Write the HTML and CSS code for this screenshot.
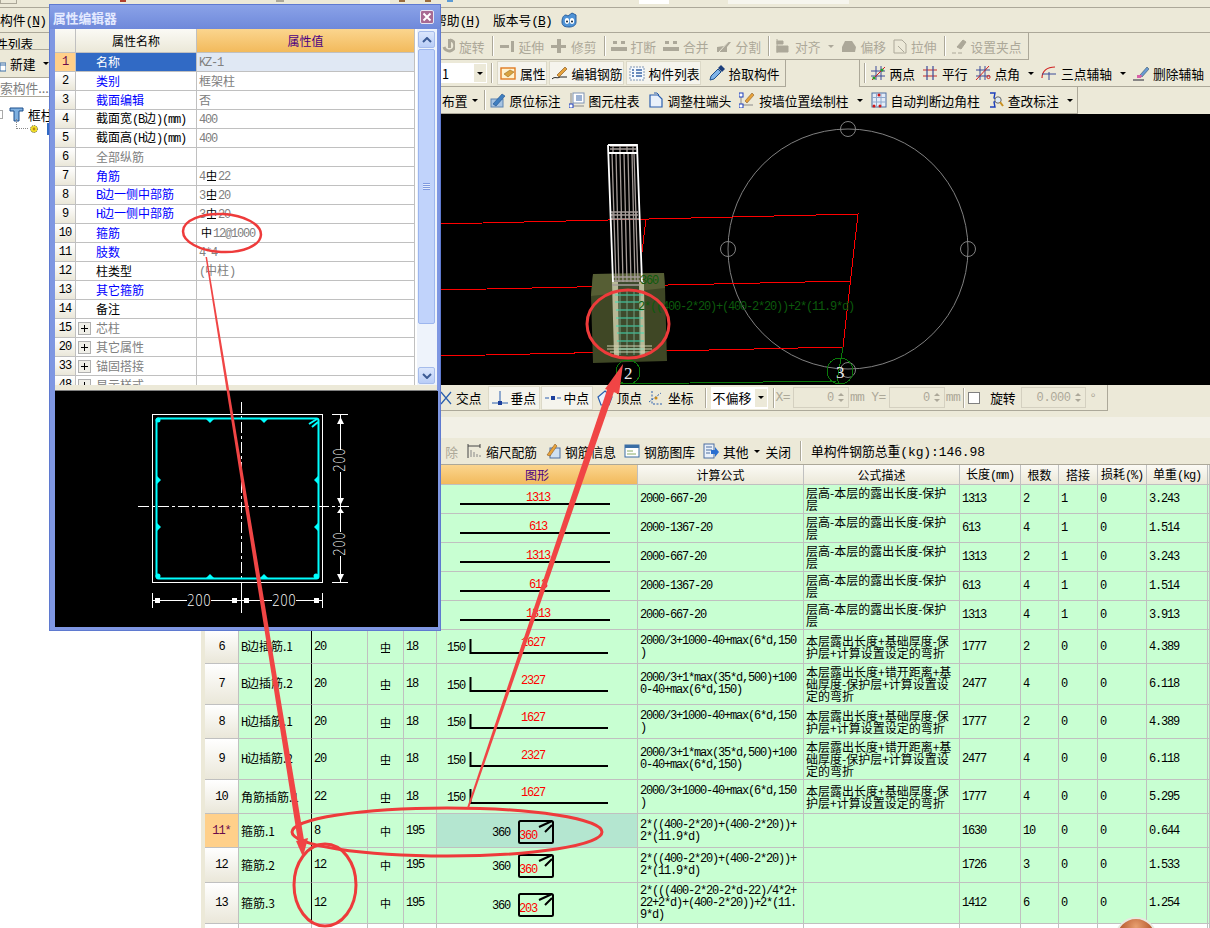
FILE: index.html
```html
<!DOCTYPE html>
<html lang="zh">
<head>
<meta charset="utf-8">
<title>属性编辑器</title>
<link rel="stylesheet" href="styles.css">
</head>
<body>
<div class="page">
  <div class="topstrip">
    <span class="strip-box"></span><span class="strip-dot d1"></span><span class="strip-dot d2"></span>
    <span class="strip-press"></span><span class="strip-dot d3"></span><span class="strip-dot d4"></span><span class="strip-dot d5"></span>
    <span class="strip-white"></span><span class="strip-press p2"></span>
  </div>
  <div class="menu">
    <span class="menu-l">构件<span class="m">(<u>N</u>)</span></span>
    <span class="menu-r">帮助<span class="m">(<u>H</u>)</span></span>
    <span class="menu-r2">版本号<span class="m">(<u>B</u>)</span></span>
    <svg class="i face" viewBox="0 0 16 16"><path d="M1 10C1 5 3 3 5 3L7 4 11 1 15 3 15 10C15 14 11 15 8 15 4 15 1 14 1 10Z" fill="#4f93d6" stroke="#2a5f9e"/><ellipse cx="6" cy="9" rx="2.2" ry="3" fill="#fff"/><ellipse cx="11" cy="9" rx="2.2" ry="3" fill="#fff"/><circle cx="6" cy="9.5" r="1" fill="#123"/><circle cx="11" cy="9.5" r="1" fill="#123"/></svg>
  </div>
  <div class="body">
    <aside class="side">
      <div class="side-tab"><span class="clip">件列表</span></div>
      <div class="side-new"><svg class="new-ic" viewBox="0 0 6 10"><rect y="1" width="6" height="8" fill="#fff" stroke="#3a6ea5"/><path d="M0 3H6" stroke="#3a6ea5"/></svg><span>新建</span><i class="caret"></i></div>
      <div class="side-search">索构件...</div>
      <div class="tree">
        <div class="tree-a">
          <span class="tree-box"></span>
          <svg class="t-ic" viewBox="0 0 15 15"><path d="M1 1H14V4H10V14H5V4H1Z" fill="#7fb0e0" stroke="#1c4f8c"/></svg>
          <span>框柱</span>
        </div>
        <div class="tree-b">
          <span class="tree-dots"></span>
          <svg class="g-ic" viewBox="0 0 10 10"><circle cx="5" cy="5" r="3.5" fill="#f5e22a" stroke="#555" stroke-dasharray="1 1"/><circle cx="5" cy="5" r="1.4" fill="#b98a10"/></svg>
          <span class="tree-sel"></span>
        </div>
      </div>
    </aside>
    <main class="main">
      <div class="row r2">
        <div class="bar off">
          <span class="it"><svg class="i i-s" viewBox="0 0 12 16"><path d="M8 2A5.5 5.5 0 1 1 2 9" fill="none" stroke="#aca899" stroke-width="3"/><rect x="6" y="1" width="3" height="9" fill="#aca899"/></svg><span class="t">旋转</span></span>
          <i class="sep"></i>
          <span class="it"><svg class="i" viewBox="0 0 16 16"><path d="M1 7H10V10H1Z" fill="#aca899"/><rect x="12" y="3" width="3" height="11" fill="#aca899"/></svg><span class="t">延伸</span></span>
          <span class="it"><svg class="i" viewBox="0 0 16 16"><path d="M0 7H15V10H0Z" fill="#aca899"/><rect x="6" y="1" width="4" height="14" fill="#aca899"/></svg><span class="t">修剪</span></span>
          <i class="sep"></i>
          <span class="it"><svg class="i" viewBox="0 0 16 16"><path d="M0 9H16V13H0ZM2 3H6V6H2ZM10 3H14V6H10Z" fill="#aca899"/></svg><span class="t">打断</span></span>
          <span class="it"><svg class="i" viewBox="0 0 16 16"><path d="M0 9H16V13H0ZM2 3H6V6H2ZM10 3H14V6H10Z" fill="#aca899"/></svg><span class="t">合并</span></span>
          <span class="it"><svg class="i" viewBox="0 0 16 16"><path d="M1 14V9L8 8 12 4H15L11 9V14Z" fill="#aca899"/><path d="M3 14 14 2" stroke="#ece9d8"/></svg><span class="t">分割</span></span>
          <i class="sep"></i>
          <span class="it"><svg class="i" viewBox="0 0 14 16"><path d="M1 1V15M1 3H7V6H1ZM1 8H12V14H1Z" fill="#aca899" stroke="#aca899"/></svg><span class="t">对齐</span><i class="caret g"></i></span>
          <span class="it"><svg class="i" viewBox="0 0 16 16"><path d="M4 3H11L15 9 14 14H1L1 9Z" fill="#aca899"/></svg><span class="t">偏移</span></span>
          <span class="it"><svg class="i i-s" viewBox="0 0 14 16"><path d="M1 2H9L13 6V15H1ZM5 8 11 14" fill="none" stroke="#aca899"/></svg><span class="t">拉伸</span></span>
          <i class="sep"></i>
          <span class="it"><svg class="i" viewBox="0 0 16 16"><path d="M6 9 12 2 15 4 10 11ZM1 15H5M7 15H11" fill="#aca899" stroke="#aca899"/></svg><span class="t">设置夹点</span></span>
        </div>
      </div>
      <div class="row r3">
        <div class="bar b3a">
          <span class="combo">1<i class="drop"><i class="caret"></i></i></span>
          <i class="sep"></i>
          <span class="it tgl"><svg class="i" viewBox="0 0 16 16"><rect x="1" y="3" width="14" height="11" fill="#fff3cf" stroke="#e07b22" stroke-width="1.4"/><path d="M4 9 10 5 14 7 8 12Z" fill="#d9a441" stroke="#8a5a12" stroke-width=".5"/></svg><span class="t">属性</span></span>
          <span class="it tgl"><svg class="i" viewBox="0 0 16 16"><path d="M5 10 13 2 15 4 7 12Z" fill="#e7a33c" stroke="#7a4a14" stroke-width=".6"/><path d="M0 14C3 11 5 14 8 12H15" fill="none" stroke="#222"/></svg><span class="t">编辑钢筋</span></span>
          <span class="it tgl"><svg class="i" viewBox="0 0 16 16"><rect x="1" y="2" width="14" height="13" fill="#f4f8fd" stroke="#7e94b3" stroke-dasharray="2 1"/><path d="M3 5H5M7 5H13M3 8H5M7 8H13M3 11H5M7 11H13" stroke="#3864a6" stroke-width="1.5"/></svg><span class="t">构件列表</span></span>
          <span class="it plain"><svg class="i" viewBox="0 0 16 16"><path d="M1 15 2 11 9 4 12 7 5 14Z" fill="#7eb3e8" stroke="#1c4f8c"/><path d="M9 3 12 0 16 4 13 7Z" fill="#1c3f7c"/></svg><span class="t">拾取构件</span></span>
        </div>
        <div class="bar b3b">
          <i class="sep"></i>
          <span class="it"><svg class="i" viewBox="0 0 16 16"><path d="M1 6H15M1 11H15M6 1V15M11 1V15" stroke="#3a4a98"/><path d="M2 15 15 2" stroke="#d02020"/><circle cx="4" cy="13" r="1.6" fill="#2a9a2a"/><circle cx="12" cy="5" r="1.6" fill="#2a9a2a"/></svg><span class="t">两点</span></span>
          <span class="it"><svg class="i" viewBox="0 0 16 16"><path d="M1 5H15M1 11H15" stroke="#c82828" stroke-width="1.2"/><path d="M5 1V15M11 1V15" stroke="#3a4a98" stroke-width="1.2"/></svg><span class="t">平行</span></span>
          <span class="it"><svg class="i" viewBox="0 0 16 16"><path d="M1 5H15M1 11H15M5 1V15M10 1V15" stroke="#3a4a98"/><path d="M1 15 14 1" stroke="#d02020"/><circle cx="13.5" cy="12" r="1.6" fill="none" stroke="#d02020"/></svg><span class="t">点角</span><i class="caret"></i></span>
          <span class="it"><svg class="i" viewBox="0 0 16 16"><path d="M1 13C1 6 6 2 14 2" fill="none" stroke="#d02020" stroke-width="1.2"/><path d="M8 7V15M1 9H15" stroke="#3a4a98"/></svg><span class="t">三点辅轴</span><i class="caret"></i></span>
          <span class="it"><svg class="i" viewBox="0 0 16 16"><path d="M7 10 14 2 16 4 9 12Z" fill="#6a9ad4" stroke="#245" stroke-width=".5"/><path d="M4 10H9L8 13H4Z" fill="#d860a8"/><path d="M0 15H11" stroke="#223"/></svg><span class="t">删除辅轴</span></span>
        </div>
      </div>
      <div class="row r4">
        <div class="bar">
          <span class="t it-nc">布置</span><i class="caret cr0"></i>
          <i class="sep s4"></i>
          <span class="it"><svg class="i" viewBox="0 0 16 16"><rect x="1" y="7" width="12" height="8" fill="#a7c4e2" stroke="#5c84b0"/><path d="M3 12 12 2 15 4 6 14Z" fill="#3f7fc0" stroke="#1c4f8c" stroke-width=".6"/></svg><span class="t">原位标注</span></span>
          <span class="it"><svg class="i" viewBox="0 0 16 16"><rect x="4" y="1" width="11" height="10" fill="#fff" stroke="#7e94b3"/><path d="M7 4H13M7 6H13M7 8H13" stroke="#3864a6"/><path d="M2 1V14H15" fill="none" stroke="#8a8a8a"/><rect x="0" y="12" width="4" height="4" fill="#fff" stroke="#1c3fbc"/></svg><span class="t">图元柱表</span></span>
          <span class="it"><svg class="i" viewBox="0 0 16 16"><path d="M2 3H10L14 7V15H2Z" fill="#eaf1fa" stroke="#2a5fae" stroke-width="1.2"/><path d="M6 1H9L11 3" fill="none" stroke="#2a5fae"/></svg><span class="t">调整柱端头</span></span>
          <span class="it"><svg class="i" viewBox="0 0 16 16"><path d="M2 3V13H14" fill="none" stroke="#8a8a8a"/><rect x="0" y="1" width="4" height="4" fill="#fff" stroke="#1c3fbc"/><rect x="0" y="12" width="4" height="4" fill="#fff" stroke="#1c3fbc"/><path d="M6 9 13 1 15 3 8 11Z" fill="#e7a33c" stroke="#7a4a14" stroke-width=".5"/></svg><span class="t">按墙位置绘制柱</span><i class="caret cr7"></i></span>
          <span class="it"><svg class="i" viewBox="0 0 16 16"><rect x="1" y="1" width="14" height="14" fill="#e3ecf8" stroke="#4d6ea0"/><path d="M5.5 1V15M10 1V15M1 5.5H15M1 10H15" stroke="#8fa9cc"/><circle cx="8" cy="3" r="1.5" fill="#d01818"/><circle cx="3" cy="14" r="1.5" fill="#d01818"/><circle cx="9" cy="14" r="1.5" fill="#d01818"/></svg><span class="t">自动判断边角柱</span></span>
          <span class="it"><svg class="i" viewBox="0 0 16 16"><path d="M2 1H7L6 6 9 8 6 10 7 15H2" fill="none" stroke="#1c3fbc" stroke-width="1.4"/><circle cx="10" cy="8" r="3.2" fill="#dfeaf6" stroke="#666"/><path d="M12 10 15 14" stroke="#c89020" stroke-width="2"/></svg><span class="t">查改标注</span><i class="caret cr7"></i></span>
        </div>
      </div>
      <div class="view">
        <svg class="scene" viewBox="205 114 1005 271">
          <rect x="205" y="114" width="1005" height="271" fill="#000"/>
          <g fill="none" stroke="#808080">
            <circle cx="848" cy="249" r="120"/><circle cx="848" cy="129" r="7.5"/><circle cx="728" cy="249" r="7.5"/><circle cx="968" cy="249" r="7.5"/><circle cx="848" cy="370" r="7.5"/>
          </g>
          <g class="crisp" fill="none" stroke="#f00">
            <path d="M441 224 858 214 843 347"/><path d="M441 290 851 281"/><path d="M441 356 843 347"/><path d="M646 219 642 252"/>
          </g>
          <path d="M593 274 664 273 665 288 667 361 593 363 591 296Z" fill="#3f4725"/>
          <path d="M593 274 664 273 665 288 591 296Z" fill="#565e34"/>
          <path d="M612 282H644L645 356H614Z" fill="#3e4a2c"/>
          <path d="M612 282H618L619 356H614ZM639 282H644L645 356H640Z" fill="#b7b996"/>
          <g stroke="#3fe0b8" fill="none">
            <path d="M615 295H643M615 302H642M616 310H643M616 318H643M616 326H643M617 333H644M617 341H644M618 349H644"/>
            <path d="M620 290V355M627 290V355M634 290V355M640 290V355" stroke="#6f9f80"/>
          </g>
          <path d="M607 346H652M607 349H652M610 352H650" stroke="#cfcfb0"/>
          <g stroke="#a59c98" fill="none" stroke-width="1.3">
            <path d="M612 153 616 282M616 153 619 282M620 153 623 282M624 153 627 282M628 153 631 282M632 153 635 282M634 153 638 282"/>
            <path d="M610 149H636M610 146H636M611 212H638M611 215H638M611 219H639M612 277H640M612 281H640M612 285H640"/>
            <path d="M613 146V153M620 146V153M627 146V153M633 146V153M613 212V220M621 212V220M629 212V220M636 212V220"/>
          </g>
          <path d="M608 145H637L642 282M613 282 608 145M608 153H637" fill="none" stroke="#fff" stroke-width="1.8"/>
          <text class="gt" x="640" y="284">360</text>
          <text class="gt" x="638" y="310">2*((400-2*20)+(400-2*20))+2*(11.9*d)</text>
          <g class="crisp" fill="none" stroke="#0a7a0a">
            <circle cx="628" cy="372" r="12"/><circle cx="840" cy="371" r="13"/>
            <path d="M617 384 837 381 843 347M838 384 838 381"/>
          </g>
          <text class="ax" x="624" y="379">2</text>
          <text class="ax" x="836" y="378">3</text>
        </svg>
      </div>
      <div class="snap">
        <div class="bar">
          <span class="it"><svg class="i s-x" viewBox="0 0 12 16"><path d="M1 2 11 14M11 2 1 14" stroke="#2a5fae" stroke-width="1.2"/></svg><span class="t">交点</span></span>
          <span class="it tgl tg"><svg class="i" viewBox="0 0 16 16"><path d="M8 1V13M0 13H16" stroke="#2a5fae"/><rect x="6" y="11" width="4" height="4" fill="#1c3f9c"/></svg><span class="t">垂点</span></span>
          <span class="it tgl tg tg2"><svg class="i" viewBox="0 0 16 16"><path d="M0 8H16" stroke="#2a5fae" stroke-dasharray="4 2"/><rect x="6" y="6" width="4" height="4" fill="#1c3f9c"/></svg><span class="t">中点</span></span>
          <span class="it vx"><svg class="i" viewBox="0 0 16 16"><path d="M8 1 15 7 12 15H4L1 7Z" fill="#eaf1fa" stroke="#2a5fae" stroke-width="1.2"/></svg><span class="t">顶点</span></span>
          <span class="it"><svg class="i" viewBox="0 0 16 16"><path d="M4 1V14H15" fill="none" stroke="#2a5fae" stroke-dasharray="2 1.5"/><path d="M1 12 13 3" stroke="#2a5fae" stroke-dasharray="2 1.5"/><circle cx="8" cy="8" r="1.5" fill="#c88a1a"/></svg><span class="t">坐标</span></span>
          <i class="sep s5"></i>
          <span class="combo c2">不偏移<i class="drop"><i class="caret"></i></i></span>
          <i class="sep s6"></i>
          <span class="lab m">X=</span><span class="spin">0<i class="sp"></i></span><span class="lab m">mm</span>
          <span class="lab m l2">Y=</span><span class="spin">0<i class="sp"></i></span><span class="lab m">mm</span>
          <i class="sep s8"></i>
          <span class="check"></span><span class="t tr">旋转</span><span class="spin s2">0.000<i class="sp"></i></span><span class="lab deg">°</span>
        </div>
      </div>
      <div class="gap-strip"></div>
      <div class="tools">
        <span class="t off-t">除</span>
        <span class="it"><svg class="i" viewBox="0 0 16 16"><path d="M2 1V15M2 3H14M14 1V5" fill="none" stroke="#444"/><path d="M5 14V7M8 14V9M11 14V11M14 14V12" stroke="#888"/></svg><span class="t">缩尺配筋</span></span>
        <span class="it"><svg class="i" viewBox="0 0 16 16"><rect x="5" y="5" width="10" height="10" fill="#cfe0f2" stroke="#4d6ea0"/><path d="M2 12 10 1 12 3 5 13Z" fill="#e7a33c" stroke="#7a4a14" stroke-width=".5"/></svg><span class="t">钢筋信息</span></span>
        <span class="it"><svg class="i" viewBox="0 0 16 16"><rect x="1" y="2" width="14" height="12" fill="#fff" stroke="#3a6ea5"/><rect x="1" y="2" width="14" height="3" fill="#3a6ea5"/><path d="M3 8H9M3 11H12" stroke="#8a6"/></svg><span class="t">钢筋图库</span></span>
        <span class="it"><svg class="i" viewBox="0 0 16 16"><rect x="1" y="1" width="10" height="14" fill="#eaf1fa" stroke="#4d6ea0"/><path d="M3 4H9M3 7H9M3 10H7" stroke="#4d6ea0"/><path d="M8 7H12V4L16 9 12 14V11H8Z" fill="#2a6fd0"/></svg><span class="t">其他</span><i class="caret sm"></i></span>
        <span class="t close">关闭</span>
        <i class="sep s7"></i>
        <span class="t total">单构件钢筋总重<span class="m">(kg):146.98</span></span>
      </div>
      <table class="grid">
        <colgroup><col class="c1"><col class="c2w"><col class="c3"><col class="c4"><col class="c5"><col class="c6"><col class="c7"><col class="c8"><col class="c9"><col class="c10"><col class="c11"><col class="c12"><col class="c13"><col class="c14"></colgroup>
        <thead>
          <tr><th></th><th>筋号</th><th>直径<span class="m">(mm)</span></th><th>级别</th><th>图号</th><th class="act">图形</th><th>计算公式</th><th>公式描述</th><th>长度<span class="m">(mm)</span></th><th>根数</th><th>搭接</th><th>损耗<span class="m">(%)</span></th><th>单重<span class="m">(kg)</span></th><th></th></tr>
        </thead>
        <tbody>
          <tr class="h29"><td class="n">1</td><td class="nm"><span class="m">B</span>边纵筋.1</td><td>20</td><td class="g"><span class="bar3">中</span></td><td>18</td><td class="s"><svg class="sh" viewBox="0 0 200 28"><use href="#line"/><text class="rd" x="101" y="16">1313</text></svg></td><td class="f">2000-667-20</td><td class="d">层高-本层的露出长度-保护<br>层</td><td>1313</td><td>2</td><td>1</td><td>0</td><td>3.243</td><td></td></tr>
          <tr class="h29"><td class="n">2</td><td class="nm"><span class="m">B</span>边纵筋.2</td><td>20</td><td class="g"><span class="bar3">中</span></td><td>18</td><td class="s"><svg class="sh" viewBox="0 0 200 28"><use href="#line"/><text class="rd" x="101" y="16">613</text></svg></td><td class="f">2000-1367-20</td><td class="d">层高-本层的露出长度-保护<br>层</td><td>613</td><td>4</td><td>1</td><td>0</td><td>1.514</td><td></td></tr>
          <tr class="h29"><td class="n">3</td><td class="nm"><span class="m">H</span>边纵筋.1</td><td>20</td><td class="g"><span class="bar3">中</span></td><td>18</td><td class="s"><svg class="sh" viewBox="0 0 200 28"><use href="#line"/><text class="rd" x="101" y="16">1313</text></svg></td><td class="f">2000-667-20</td><td class="d">层高-本层的露出长度-保护<br>层</td><td>1313</td><td>2</td><td>1</td><td>0</td><td>3.243</td><td></td></tr>
          <tr class="h29"><td class="n">4</td><td class="nm"><span class="m">H</span>边纵筋.2</td><td>20</td><td class="g"><span class="bar3">中</span></td><td>18</td><td class="s"><svg class="sh" viewBox="0 0 200 28"><use href="#line"/><text class="rd" x="101" y="16">613</text></svg></td><td class="f">2000-1367-20</td><td class="d">层高-本层的露出长度-保护<br>层</td><td>613</td><td>4</td><td>1</td><td>0</td><td>1.514</td><td></td></tr>
          <tr class="h29"><td class="n">5</td><td class="nm">角筋.1</td><td>22</td><td class="g"><span class="bar3">中</span></td><td>18</td><td class="s"><svg class="sh" viewBox="0 0 200 28"><use href="#line"/><text class="rd" x="101" y="16">1313</text></svg></td><td class="f">2000-667-20</td><td class="d">层高-本层的露出长度-保护<br>层</td><td>1313</td><td>4</td><td>1</td><td>0</td><td>3.913</td><td></td></tr>

          <tr class="h34"><td class="n">6</td><td class="nm"><span class="m">B</span>边插筋.1</td><td>20</td><td class="g"><span class="bar3">中</span></td><td>18</td><td class="s"><svg class="sh" viewBox="0 0 200 33"><use href="#ell"/><text class="bk" x="10" y="21">150</text><text class="rd" x="96" y="16">1627</text></svg></td><td class="f">2000/3+1000-40+max(6*d,150<br>)</td><td class="d">本层露出长度+基础厚度-保<br>护层+计算设置设定的弯折</td><td>1777</td><td>2</td><td>0</td><td>0</td><td>4.389</td><td></td></tr>
          <tr class="h41"><td class="n">7</td><td class="nm"><span class="m">B</span>边插筋.2</td><td>20</td><td class="g"><span class="bar3">中</span></td><td>18</td><td class="s"><svg class="sh" viewBox="0 0 200 40"><use href="#ell" y="4"/><text class="bk" x="10" y="25">150</text><text class="rd" x="96" y="20">2327</text></svg></td><td class="f">2000/3+1*max(35*d,500)+100<br>0-40+max(6*d,150)</td><td class="d">本层露出长度+错开距离+基<br>础厚度-保护层+计算设置设<br>定的弯折</td><td>2477</td><td>4</td><td>0</td><td>0</td><td>6.118</td><td></td></tr>
          <tr class="h34"><td class="n">8</td><td class="nm"><span class="m">H</span>边插筋.1</td><td>20</td><td class="g"><span class="bar3">中</span></td><td>18</td><td class="s"><svg class="sh" viewBox="0 0 200 33"><use href="#ell"/><text class="bk" x="10" y="21">150</text><text class="rd" x="96" y="16">1627</text></svg></td><td class="f">2000/3+1000-40+max(6*d,150<br>)</td><td class="d">本层露出长度+基础厚度-保<br>护层+计算设置设定的弯折</td><td>1777</td><td>2</td><td>0</td><td>0</td><td>4.389</td><td></td></tr>
          <tr class="h41"><td class="n">9</td><td class="nm"><span class="m">H</span>边插筋.2</td><td>20</td><td class="g"><span class="bar3">中</span></td><td>18</td><td class="s"><svg class="sh" viewBox="0 0 200 40"><use href="#ell" y="4"/><text class="bk" x="10" y="25">150</text><text class="rd" x="96" y="20">2327</text></svg></td><td class="f">2000/3+1*max(35*d,500)+100<br>0-40+max(6*d,150)</td><td class="d">本层露出长度+错开距离+基<br>础厚度-保护层+计算设置设<br>定的弯折</td><td>2477</td><td>4</td><td>0</td><td>0</td><td>6.118</td><td></td></tr>
          <tr class="h34"><td class="n">10</td><td class="nm">角筋插筋.1</td><td>22</td><td class="g"><span class="bar3">中</span></td><td>18</td><td class="s"><svg class="sh" viewBox="0 0 200 33"><use href="#ell"/><text class="bk" x="10" y="21">150</text><text class="rd" x="96" y="16">1627</text></svg></td><td class="f">2000/3+1000-40+max(6*d,150<br>)</td><td class="d">本层露出长度+基础厚度-保<br>护层+计算设置设定的弯折</td><td>1777</td><td>4</td><td>0</td><td>0</td><td>5.295</td><td></td></tr>
          <tr class="h34"><td class="n cur">11*</td><td class="nm">箍筋.1</td><td>8</td><td class="g">中</td><td>195</td><td class="s sel"><svg class="sh" viewBox="0 0 200 33"><use href="#box"/><text class="bk" x="55" y="22">360</text><text class="rd" x="91" y="25">360</text></svg></td><td class="f">2*((400-2*20)+(400-2*20))+<br>2*(11.9*d)</td><td class="d"></td><td>1630</td><td>10</td><td>0</td><td>0</td><td>0.644</td><td></td></tr>
          <tr class="h35"><td class="n">12</td><td class="nm">箍筋.2</td><td>12</td><td class="g">中</td><td>195</td><td class="s"><svg class="sh" viewBox="0 0 200 34"><use href="#box"/><text class="bk" x="55" y="22">360</text><text class="rd" x="91" y="25">360</text></svg></td><td class="f">2*((400-2*20)+(400-2*20))+<br>2*(11.9*d)</td><td class="d"></td><td>1726</td><td>3</td><td>0</td><td>0</td><td>1.533</td><td></td></tr>
          <tr class="h41"><td class="n">13</td><td class="nm">箍筋.3</td><td>12</td><td class="g">中</td><td>195</td><td class="s"><svg class="sh" viewBox="0 0 200 40"><use href="#box" y="4"/><text class="bk" x="55" y="26">360</text><text class="rd" x="91" y="29">203</text></svg></td><td class="f">2*(((400-2*20-2*d-22)/4*2+<br>22+2*d)+(400-2*20))+2*(11.<br>9*d)</td><td class="d"></td><td>1412</td><td>6</td><td>0</td><td>0</td><td>1.254</td><td></td></tr>
          <tr class="blank"><td class="n"></td><td></td><td></td><td></td><td></td><td></td><td></td><td></td><td></td><td></td><td></td><td></td><td></td><td></td></tr>
        </tbody>
      </table>
    </main>
  </div>

  <svg class="defs" width="0" height="0">
    <defs>
      <g id="line"><path d="M23 19H173" stroke="#000" stroke-width="2"/></g>
      <g id="ell"><path d="M33.5 9V23H171" fill="none" stroke="#000" stroke-width="2"/></g>
      <g id="box"><rect x="82" y="7" width="34" height="22" rx="1.5" fill="none" stroke="#000" stroke-width="2"/><path d="M102 13 115 7M108 18 115 11" stroke="#000" stroke-width="2"/></g>
    </defs>
  </svg>

  <section class="dialog">
    <header class="dlg-title"><span>属性编辑器</span><span class="dlg-x"><svg viewBox="0 0 10 10"><path d="M1.5 1.5 8.5 8.5M8.5 1.5 1.5 8.5" stroke="#fff" stroke-width="2"/></svg></span></header>
    <div class="dlg-top">
      <div class="prop-wrap">
        <table class="prop">
          <colgroup><col class="p1"><col class="p2"><col class="p3"></colgroup>
          <thead><tr><th></th><th>属性名称</th><th class="act">属性值</th></tr></thead>
          <tbody>
            <tr class="focus"><td class="n cur">1</td><td class="pn selc">名称</td><td class="v rowv"><span class="m">KZ-1</span></td></tr>
            <tr><td class="n">2</td><td class="pn b">类别</td><td class="v">框架柱</td></tr>
            <tr><td class="n">3</td><td class="pn b">截面编辑</td><td class="v">否</td></tr>
            <tr><td class="n">4</td><td class="pn">截面宽<span class="m">(B</span>边<span class="m">)(mm)</span></td><td class="v"><span class="m">400</span></td></tr>
            <tr><td class="n">5</td><td class="pn">截面高<span class="m">(H</span>边<span class="m">)(mm)</span></td><td class="v"><span class="m">400</span></td></tr>
            <tr><td class="n">6</td><td class="pn gr">全部纵筋</td><td class="v"></td></tr>
            <tr><td class="n">7</td><td class="pn b">角筋</td><td class="v"><span class="m">4</span><span class="bar3 dk sy">中</span><span class="m">22</span></td></tr>
            <tr><td class="n">8</td><td class="pn b"><span class="m">B</span>边一侧中部筋</td><td class="v"><span class="m">3</span><span class="bar3 dk sy">中</span><span class="m">20</span></td></tr>
            <tr><td class="n">9</td><td class="pn b"><span class="m">H</span>边一侧中部筋</td><td class="v"><span class="m">3</span><span class="bar3 dk sy">中</span><span class="m">20</span></td></tr>
            <tr><td class="n">10</td><td class="pn b">箍筋</td><td class="v"><span class="dk sy ind">中</span><span class="m">12@1000</span></td></tr>
            <tr><td class="n">11</td><td class="pn b">肢数</td><td class="v"><span class="m">4*4</span></td></tr>
            <tr><td class="n">12</td><td class="pn">柱类型</td><td class="v"><span class="m">(</span>中柱<span class="m">)</span></td></tr>
            <tr><td class="n">13</td><td class="pn b">其它箍筋</td><td class="v"></td></tr>
            <tr><td class="n">14</td><td class="pn">备注</td><td class="v"></td></tr>
            <tr><td class="n">15</td><td class="pn gr x"><i class="plus"></i>芯柱</td><td class="v"></td></tr>
            <tr><td class="n">20</td><td class="pn gr x"><i class="plus"></i>其它属性</td><td class="v"></td></tr>
            <tr><td class="n">33</td><td class="pn gr x"><i class="plus"></i>锚固搭接</td><td class="v"></td></tr>
            <tr><td class="n">48</td><td class="pn gr x"><i class="plus"></i>显示样式</td><td class="v"></td></tr>
          </tbody>
        </table>
      </div>
      <div class="vs">
        <span class="vs-btn"><svg viewBox="0 0 10 6"><path d="M1 5 5 1 9 5" fill="none" stroke="#3b5a94" stroke-width="2"/></svg></span>
        <span class="vs-thumb"><i></i></span>
        <span class="vs-btn"><svg viewBox="0 0 10 6"><path d="M1 1 5 5 9 1" fill="none" stroke="#3b5a94" stroke-width="2"/></svg></span>
      </div>
    </div>
    <div class="dlg-sep"></div>
    <svg class="section" viewBox="54 391 383 236">
      <rect x="54" y="391" width="383" height="236" fill="#000"/>
      <g fill="none" stroke="#fff">
        <rect x="151.5" y="414.5" width="170" height="168"/>
        <path d="M240.5 402V615M137 506.5H350" stroke-dasharray="11 3 3 3"/>
        <path d="M331 414.5H347M331 582.5H347M339.5 414V450M339.5 472V532M339.5 556V582M151.5 593V608M321.5 593V608M240.5 593V608M151 600.5H186M210 600.5H271M295 600.5H322"/>
      </g>
      <g fill="#fff">
        <path d="M336 424 339.500 417 343 424ZM336 498 339.500 505 343 498ZM336 513 339.500 508 343 513ZM336 574 339.500 581 343 574Z"/>
        <rect x="154" y="598" width="5" height="5"/><rect x="231" y="598" width="5" height="5"/><rect x="243" y="598" width="5" height="5"/><rect x="313" y="598" width="5" height="5"/>
      </g>
      <text class="dim" x="186" y="606" textLength="24" lengthAdjust="spacingAndGlyphs">200</text>
      <text class="dim" x="271" y="606" textLength="24" lengthAdjust="spacingAndGlyphs">200</text>
      <text class="dim" transform="translate(344 472) rotate(-90)" textLength="24" lengthAdjust="spacingAndGlyphs">200</text>
      <text class="dim" transform="translate(344 556) rotate(-90)" textLength="24" lengthAdjust="spacingAndGlyphs">200</text>
      <rect x="155.500" y="418.500" width="162" height="160" rx="2" fill="none" stroke="#00ffff" stroke-width="2"/>
      <g fill="#00ffff">
        <path d="M205 419H213L209 423ZM259 419H267L263 423ZM205 578 209 574 213 578ZM259 578 263 574 267 578ZM156 476V484L160 480ZM156 523V531L160 527ZM317 476V484L313 480ZM317 523V531L313 527Z"/>
        <circle cx="157" cy="420" r="2.500"/><circle cx="157" cy="576" r="2.500"/><circle cx="315" cy="576" r="2.500"/>
      </g>
      <path d="M308 424 316 419M311 427 317 422" stroke="#00ffff" stroke-width="2"/>
    </svg>
  </section>

  <span class="orb"></span>

  <svg class="marks" viewBox="0 0 1210 928">
    <g fill="none" stroke="#ee3b3b">
      <ellipse cx="222" cy="233" rx="39" ry="19" stroke-width="2.500" transform="rotate(3 222 233)"/>
      <ellipse cx="628" cy="324" rx="41" ry="34" stroke-width="3"/>
      <ellipse cx="447" cy="832" rx="155" ry="24" stroke-width="3"/>
      <ellipse cx="325" cy="885" rx="31" ry="41" stroke-width="3"/>
    </g>
    <g fill="#f04545">
      <path d="M205.500 257 207 257 305 846 299 848Z"/>
      <path d="M296 841 308 838 303 857Z"/>
      <path d="M467 808 469 808 616 386 609 384Z"/>
      <path d="M605 389 619 394 623 364Z"/>
    </g>
  </svg>
</div>
</body>
</html>
```
FILE: styles.css
```css
* { box-sizing: border-box; }
html, body { margin: 0; padding: 0; }
body { background: #fff; }
.page {
  position: relative; width: 1210px; height: 928px; overflow: hidden;
  background: #ece9d8; color: #000;
  font: 12.75px/13px "Noto Sans CJK SC", "Liberation Sans", sans-serif;
}
.m { font: 12px/12px "Liberation Mono", monospace; letter-spacing: -1.2px; }
i { font-style: normal; }
u { text-decoration: underline; }
.crisp { shape-rendering: crispEdges; }

/* top */
.topstrip { height: 8px; display: flex; border-bottom: 1px solid #aca899; overflow: hidden; }
.strip-box { width: 17px; height: 4px; background: #ece9d8; border: 1px solid #aca899; border-top: 0; }
.strip-dot { width: 6px; height: 2px; background: #9a6b3d; }
.d1 { margin-left: 103px; background: #b0402c; }
.d2 { margin-left: 150px; background: #aca899; width: 8px; }
.strip-press { width: 30px; height: 4px; margin-left: 0; background: #f6f5ee; margin-left: 76px; }
.d3 { margin-left: 9px; }
.d4 { margin-left: 20px; }
.d5 { margin-left: 16px; background: #5b9bd5; }
.strip-white { width: 30px; height: 4px; background: #fff; margin-left: 186px; }
.p2 { margin-left: 59px; }
.menu { height: 25px; display: flex; align-items: center; border-bottom: 1px solid #aca899; }
.menu .m { font-size: 13px; letter-spacing: -1px; }
.menu-l { width: 434px; flex: none; }
.menu-r { width: 59px; flex: none; }
.menu-r2 { width: 68px; flex: none; }
.face { width: 16px; height: 16px; }
.body { display: flex; height: 895px; }

/* side */
.side { width: 205px; flex: none; display: flex; flex-direction: column; }
.side-tab { height: 17px; padding-top: 4px; border-bottom: 1px solid #aca899; overflow: hidden; }
.clip { display: block; margin-left: -5px; }
.side-new { height: 28px; display: flex; align-items: center; gap: 4px; border-bottom: 1px solid #aca899; }
.new-ic { width: 6px; height: 10px; margin-top: 6px; }
.side-new .caret { margin-left: 3px; }
.side-search { height: 19px; padding-top: 3px; color: #808080; background: #fff; border-bottom: 1px solid #aca899; }
.tree { flex: 1; background: #fff; border-right: 4px solid #ece9d8; padding-top: 9px; }
.tree-a { display: flex; align-items: center; gap: 4px; height: 16px; }
.tree-box { width: 3px; height: 9px; border: 1px solid #aaa; border-left: 0; margin-right: 2px; }
.t-ic { width: 15px; height: 15px; }
.tree-b { position: relative; display: flex; align-items: center; height: 14px; padding-left: 16px; }
.tree-dots { width: 12px; height: 10px; border-left: 1px dotted #888; border-bottom: 1px dotted #888; margin-top: -10px; }
.g-ic { width: 10px; height: 10px; margin-left: 1px; }
.tree-sel { width: 8px; height: 12px; background: #316ac5; margin-left: 8px; }

/* toolbars */
.main { width: 1005px; flex: none; display: flex; flex-direction: column; }
.main > * { flex: none; }
.row { display: flex; padding-left: 235px; }
.r2, .r3, .r4 { height: 27px; }
.r2 { padding-left: 236px; }
.bar { display: flex; align-items: center; gap: 7px; border-right: 1px solid #aca899; border-bottom: 1px solid #aca899; padding-right: 6px; }
.it { display: inline-flex; align-items: center; gap: 4px; white-space: nowrap; }
.i { width: 16px; height: 16px; flex: none; display: block; }
.i-s { width: 14px; }
.off { color: #aca899; }
.sep { width: 2px; height: 20px; background: #aca899; border-right: 1px solid #fff; flex: none; }
.r2 .sep { margin-right: -2px; }
.caret { display: inline-block; flex: none; width: 0; height: 0; border: 3px solid transparent; border-top: 3px solid #000; border-bottom: 0; margin-left: 4px; }
.caret.g { border-top-color: #aca899; margin-left: 3px; }
.caret.sm { margin-left: 1px; }
.caret.cr7 { margin-left: 4px; }
.caret.cr0 { margin-left: -4px; }
.combo { width: 47px; height: 20px; background: #fff; display: flex; align-items: center; padding-left: 2px; position: relative; justify-content: space-between; }
.drop { width: 12px; height: 18px; background: #ece9d8; display: flex; align-items: center; justify-content: center; margin-right: 1px; }
.drop .caret { margin: 0; }
.b3a { gap: 2px; padding-right: 5px; }
.b3a .sep { margin: 0 2px 0 2px; }
.tgl { background: #f5f4ed; border: 1px solid #dcd9c8; height: 24px; padding: 0 0 0 2px; }
.plain { margin-left: 6px; }
.b3b { margin-left: 73px; border-left: 1px solid #aca899; padding-left: 4px; padding-right: 0; gap: 7px; border-right: 0; flex: 1; }
.b3b .sep { margin-right: -3px; }
.r4 .bar { gap: 8px; padding-right: 4px; }
.it-nc { margin-left: 2px; white-space: nowrap; flex: none; }
.s4 { margin: 0 -4px 0 -2px; }
.view { height: 271px; }
.scene { width: 1005px; height: 271px; display: block; }
.gt { font: 12px "Liberation Mono", monospace; letter-spacing: -1.2px; fill: #0c5a0c; }
.ax { font: 17px "Liberation Serif", serif; fill: #e8e8e8; }
.snap { height: 26px; padding-left: 235px; display: flex; }
.snap .bar { gap: 6px; padding-right: 12px; height: 26px; }
.s-x { width: 12px; margin-right: 0; }
.tg { gap: 3px; padding: 0 3px; width: 52px; }
.tg2 { margin-left: -5px; }
.vx { margin-left: -2px; }
.s5 { margin: 0 -2px 0 5px; }
.c2 { width: 57px; height: 22px; font-size: 13px; }
.s6 { margin: 0 -5px 0 -1px; }
.s8 { margin: 0 -3px 0 -3px; }
.lab { color: #aca899; }
.snap .lab.m { font-size: 13px; letter-spacing: -.6px; margin-right: -3px; }
.snap .spin + .lab.m { margin-left: -5px; margin-right: 0; }
.l2 { margin-left: 1px; }
.spin { width: 56px; height: 21px; border: 1px solid #d4d0c0; color: #aca899; display: flex; align-items: center; justify-content: flex-end; font: 12px "Liberation Mono", monospace; letter-spacing: -.4px; padding-right: 14px; position: relative; }
.sp { position: absolute; right: 4px; top: 5px; border: 3px solid transparent; border-bottom-color: #aca899; width: 0; height: 0; border-top: 0; }
.sp::after { content: ""; position: absolute; left: -3px; top: 6px; border: 3px solid transparent; border-top-color: #aca899; border-bottom: 0; }
.s2 { width: 65px; margin-left: -1px; }
.check { width: 12px; height: 12px; background: #fff; border: 1px solid #808080; }
.tr { margin-left: 4px; }
.deg { margin-left: -1px; }
.gap-strip { height: 27px; background: #f2f0e6; border-top: 6px solid #ece9d8; }
.tools { height: 27px; padding-left: 235px; display: flex; align-items: center; gap: 8px; border-bottom: 1px solid #aca899; }
.off-t { color: #aca899; width: 18px; text-align: right; }
.close { margin-left: -2px; }
.s7 { height: 20px; margin: 0 1px 0 1px; }
.total .m { font-size: 13px; letter-spacing: -.1px; }
.total { margin-left: 0; }

/* grid */
.grid { table-layout: fixed; width: 1005px; border-collapse: separate; border-spacing: 0; background: #fff; font-size: 12px; line-height: 12px; }
.c1 { width: 34px; } .c2w { width: 73px; } .c3 { width: 56px; } .c4 { width: 36px; } .c5 { width: 33px; }
.c6 { width: 201px; } .c7 { width: 166px; } .c8 { width: 156px; } .c9 { width: 61px; } .c10 { width: 38px; }
.c11 { width: 39px; } .c12 { width: 49px; } .c13 { width: 61px; } .c14 { width: 2px; }
.grid th { height: 20px; font-weight: 400; background: linear-gradient(#fbfaf5, #ebe8d8); border-right: 1px solid #c0c0c0; border-bottom: 1px solid #c0c0c0; padding: 0; white-space: nowrap; }
.act { background: linear-gradient(#fbd58e, #f2ba5c) !important; color: #4b0082; }
.grid td { background: #c8ffd2; border-right: 1px solid #c0c0c0; border-bottom: 1px solid #c0c0c0; padding: 0 2px; font: 12px/12px "Liberation Mono", monospace; letter-spacing: -1.2px; white-space: nowrap; vertical-align: middle; overflow: hidden; }
.grid td.n, .prop td.n { background: linear-gradient(#fff, #eae7d9); text-align: center; padding: 0; font: 12px/12px "Liberation Mono", monospace; letter-spacing: -1px; }
.grid td.cur, .prop td.cur { background: #ffd08a; color: #6a0a4a; }
.grid td.nm { border-right: 1px solid #000; font: 12px/12px "Noto Sans CJK SC", sans-serif; letter-spacing: 0; }
.grid td.g { text-align: center; font: 11px/12px "Noto Sans CJK SC", sans-serif; letter-spacing: 0; }
.grid td.d { font: 12px/12px "Noto Sans CJK SC", sans-serif; letter-spacing: 0; }
.grid td.s { padding: 0; }
.grid td.sel { background: #b4e6d0; }
.bar3 { position: relative; display: inline-block; }
.bar3::after { content: ""; position: absolute; left: 1px; right: 1px; bottom: 0; height: 1px; background: currentColor; }
.sy { font-size: 11px; margin: 0 1px; }
.h29 { height: 29px; } .h34 { height: 34px; } .h35 { height: 35px; } .h41 { height: 41px; }
.blank { height: 20px; }
.blank td { background: #fff !important; }
.sh { display: block; width: 200px; }
.rd { font: 12px "Liberation Mono", monospace; letter-spacing: -1.2px; fill: #f00; text-anchor: middle; }
.bk { font: 12px "Liberation Mono", monospace; letter-spacing: -1.2px; fill: #000; }
.defs { position: absolute; }

/* dialog */
.dialog { position: absolute; left: 49px; top: 4px; width: 392px; height: 627px; background: #7f97e2; border: 1px solid #5f7ad0; padding: 0 3px 3px 5px; display: flex; flex-direction: column; }
.dlg-title { height: 24px; flex: none; display: flex; align-items: center; justify-content: space-between; color: #e4eaff; font-weight: 700; background: linear-gradient(#8aa2e8, #6f89da); margin: 0 -3px 0 -5px; padding-left: 3px; padding-right: 6px; }
.dlg-x { width: 14px; height: 14px; display: flex; align-items: center; justify-content: center; background: #a86a92; border: 1px solid #e6e6f4; border-radius: 2px; }
.dlg-x svg { width: 10px; height: 10px; }
.dlg-top { height: 356px; flex: none; display: flex; background: #fff; font-size: 12px; line-height: 12px; }
.prop-wrap { width: 362px; height: 356px; overflow: hidden; flex: none; }
.prop { table-layout: fixed; width: 360px; border-collapse: separate; border-spacing: 0; }
.p1 { width: 21px; } .p2 { width: 121px; } .p3 { width: 218px; }
.prop th { height: 24px; font-weight: 400; background: linear-gradient(#fbfaf5, #ebe8d8); border-right: 1px solid #c0c0c0; border-bottom: 1px solid #c0c0c0; padding: 0; }
.prop td { height: 19px; border-right: 1px solid #c0c0c0; border-bottom: 1px solid #c0c0c0; padding: 0 0 0 2px; white-space: nowrap; overflow: hidden; }
.prop td.pn { padding-left: 20px; }
.prop td.x { padding-left: 2px; }
.prop td.selc { background: #316ac5; color: #fff; }
.prop td.b { color: #0000ff; }
.prop td.gr { color: #808080; }
.prop td.v { color: #808080; }
.prop td.rowv { background: #e0e8f4; }
.dk { color: #000; }
.ind { margin-left: 2px; }
.plus { display: inline-block; width: 13px; height: 13px; margin-right: 5px; vertical-align: -2px; border: 1px solid #b0b0b0; background: linear-gradient(#000, #000) center / 7px 1px no-repeat, linear-gradient(#000, #000) center / 1px 7px no-repeat, #f0efe8; }
.vs { width: 20px; flex: none; background: #eef3fb; padding: 2px 2px 1px 1px; display: flex; flex-direction: column; justify-content: space-between; }
.vs-btn { height: 17px; flex: none; background: linear-gradient(#dbe6fc, #b9cdf7); border: 1px solid #a6bceb; border-radius: 2px; display: flex; align-items: center; justify-content: center; }
.vs-btn svg { width: 10px; height: 6px; }
.vs-thumb { height: 275px; margin: 1px 0 auto; background: #c1d3fb; border: 1px solid #9db6ee; border-radius: 2px; display: flex; align-items: center; justify-content: center; }
.vs-thumb i { width: 7px; height: 7px; background: repeating-linear-gradient(#7f9ae0 0 1px, #e4ecfd 1px 2px); }
.dlg-sep { height: 6px; flex: none; background: #ece9d8; border-bottom: 1px solid #808080; }
.section { width: 383px; height: 236px; display: block; flex: none; }
.dim { font: 200 15px "DejaVu Sans", "Liberation Sans", sans-serif; fill: #fff; }

/* overlays */
.orb { position: absolute; left: 1115px; top: 917px; width: 42px; height: 42px; border-radius: 50%; background: radial-gradient(circle at 50% 20%, #e8a070, #a8441a 60%); border: 2px solid #e8e8e0; }
.marks { position: absolute; left: 0; top: 0; width: 1210px; height: 928px; pointer-events: none; }
```
